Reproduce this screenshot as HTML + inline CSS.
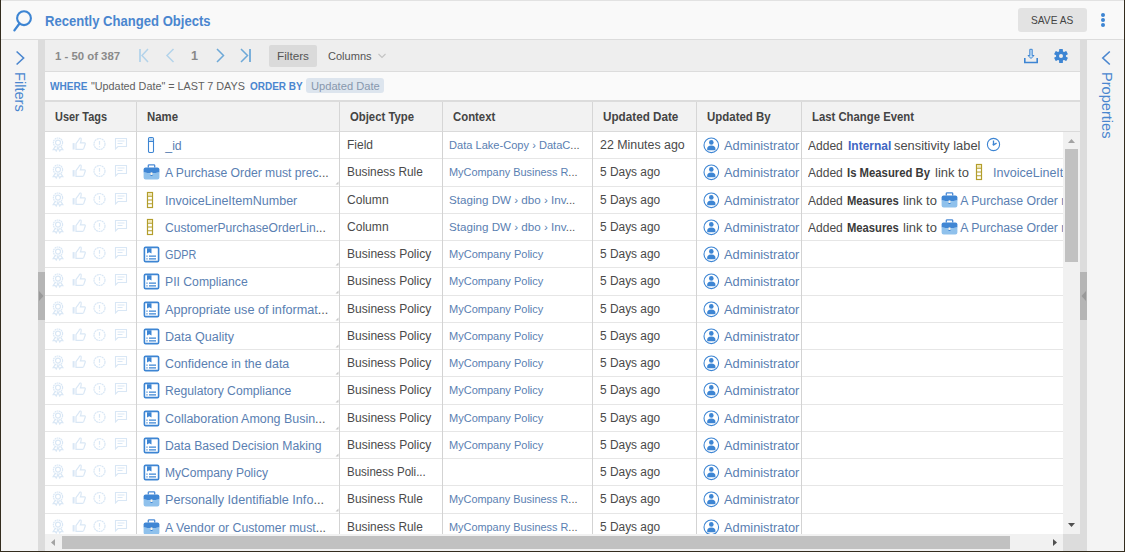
<!DOCTYPE html><html><head><meta charset="utf-8"><style>
*{box-sizing:border-box;margin:0;padding:0}
html,body{width:1125px;height:552px;overflow:hidden;background:#f4f4f4;font-family:"Liberation Sans",sans-serif;color:#333}
.a{position:absolute}
.t{position:absolute;white-space:nowrap;line-height:1;transform-origin:0 0}
</style></head><body>

<div class="a" style="left:0;top:0;width:1125px;height:1px;background:#e2e2e2"></div>
<div class="a" style="left:0;top:1px;width:1125px;height:38px;background:#f9f9f9"></div>
<div class="a" style="left:0;top:39px;width:1125px;height:1px;background:#dcdcdc"></div>
<svg class="a" style="left:11px;top:8px" width="24" height="26" viewBox="0 0 24 26"><circle cx="13" cy="10.2" r="6.9" fill="none" stroke="#3d85d3" stroke-width="2.1"/><path d="M8.5 15.5 L3.4 22.4" stroke="#3d85d3" stroke-width="2.3" stroke-linecap="round"/></svg>
<div class="t" style="left:44.7px;top:12.68px;font-size:15.5px;color:#4a86cf;font-weight:bold;transform:scaleX(0.8432);">Recently Changed Objects</div>
<div class="a" style="left:1018px;top:8px;width:69px;height:24px;background:#e3e3e3;border-radius:3px"></div>
<div class="t" style="left:1031.2px;top:14.86px;font-size:11.5px;color:#444;transform:scaleX(0.8862);">SAVE AS</div>
<div class="a" style="left:1101px;top:12.5px;width:4.2px;height:4.2px;border-radius:50%;background:#3d85d3"></div>
<div class="a" style="left:1101px;top:17.8px;width:4.2px;height:4.2px;border-radius:50%;background:#3d85d3"></div>
<div class="a" style="left:1101px;top:23.1px;width:4.2px;height:4.2px;border-radius:50%;background:#3d85d3"></div>
<svg class="a" style="left:14px;top:50px" width="12" height="16" viewBox="0 0 12 16"><path d="M2.6 1.5 L9.6 8 L2.6 14.5" fill="none" stroke="#4a86cf" stroke-width="1.6"/></svg>
<div class="t" style="left:27px;top:72px;font-size:14.6px;color:#4a86cf;transform:rotate(90deg)">Filters</div>
<svg class="a" style="left:1100px;top:50px" width="12" height="16" viewBox="0 0 12 16"><path d="M9.8 1.5 L2.8 8 L9.8 14.5" fill="none" stroke="#4a86cf" stroke-width="1.6"/></svg>
<div class="t" style="left:1113.5px;top:72px;font-size:14.6px;color:#4a86cf;transform:rotate(90deg)">Properties</div>
<div class="a" style="left:38px;top:40px;width:7px;height:511px;background:#dcdcdc"></div>
<div class="a" style="left:1080px;top:40px;width:7px;height:511px;background:#dcdcdc"></div>
<div class="a" style="left:38px;top:272px;width:7px;height:48px;background:#b5b5b5"></div>
<div class="a" style="left:1080px;top:272px;width:7px;height:48px;background:#b5b5b5"></div>
<svg class="a" style="left:38px;top:290px" width="7" height="12" viewBox="0 0 7 12"><path d="M1 1 L5.5 6 L1 11Z" fill="#999"/></svg>
<svg class="a" style="left:1080px;top:290px" width="7" height="12" viewBox="0 0 7 12"><path d="M6 1 L1.5 6 L6 11Z" fill="#999"/></svg>
<div class="a" style="left:45px;top:40px;width:1035px;height:31px;background:#eeeeee"></div>
<div class="a" style="left:45px;top:71px;width:1035px;height:1px;background:#dcdcdc"></div>
<div class="t" style="left:55.3px;top:49.98px;font-size:11.6px;color:#8a8a8a;font-weight:bold;transform:scaleX(0.9803);">1 - 50 of 387</div>
<svg class="a" style="left:136px;top:47px" width="120" height="18" viewBox="0 0 120 18"><path d="M4 2V15" stroke="#b3d3ea" stroke-width="1.8"/><path d="M12 2 L6 8.5 L12 15" fill="none" stroke="#b3d3ea" stroke-width="1.5"/><path d="M37.5 2 L31 8.5 L37.5 15" fill="none" stroke="#b3d3ea" stroke-width="1.5"/><path d="M81 2 L87.5 8.5 L81 15" fill="none" stroke="#6ea9d8" stroke-width="1.5"/><path d="M105 2 L111.5 8.5 L105 15" fill="none" stroke="#6ea9d8" stroke-width="1.5"/><path d="M114 2V15" stroke="#6ea9d8" stroke-width="1.8"/></svg>
<div class="t" style="left:190.8px;top:49.47px;font-size:13.5px;color:#888;font-weight:bold;transform:scaleX(0.9323);">1</div>
<div class="a" style="left:269px;top:45px;width:48px;height:22px;background:#dadada;border-radius:2px"></div>
<div class="t" style="left:277px;top:50.08px;font-size:11.6px;color:#555;transform:scaleX(1.0134);">Filters</div>
<div class="t" style="left:328.4px;top:50.08px;font-size:11.6px;color:#555;transform:scaleX(0.9526);">Columns</div>
<svg class="a" style="left:377px;top:52px" width="10" height="8" viewBox="0 0 10 8"><path d="M1.5 2 L5 5.5 L8.5 2" fill="none" stroke="#c3c3c3" stroke-width="1.1"/></svg>
<svg class="a" style="left:1022px;top:47px" width="18" height="18" viewBox="0 0 18 18"><path d="M2.8 11 V15.5 H15.2 V11" fill="none" stroke="#3d85d3" stroke-width="1.6"/><path d="M7.8 2.3 H10.2 V8.5 H12 L9 11.5 L6 8.5 H7.8 Z" fill="#c7e0f5" stroke="#3d85d3" stroke-width="1"/></svg>
<svg class="a" style="left:1053px;top:48px" width="16" height="16" viewBox="0 0 16 16"><g transform="translate(8,8)" fill="#3d85d3"><rect x="-1.9" y="-7" width="3.8" height="3.5" rx="0.6" transform="rotate(0)"/><rect x="-1.9" y="-7" width="3.8" height="3.5" rx="0.6" transform="rotate(60)"/><rect x="-1.9" y="-7" width="3.8" height="3.5" rx="0.6" transform="rotate(120)"/><rect x="-1.9" y="-7" width="3.8" height="3.5" rx="0.6" transform="rotate(180)"/><rect x="-1.9" y="-7" width="3.8" height="3.5" rx="0.6" transform="rotate(240)"/><rect x="-1.9" y="-7" width="3.8" height="3.5" rx="0.6" transform="rotate(300)"/><circle r="5" /></g><circle cx="8" cy="8" r="2" fill="#eee"/></svg>
<div class="a" style="left:45px;top:72px;width:1035px;height:28px;background:#fafafa"></div>
<div class="t" style="left:50.3px;top:79.98px;font-size:11.6px;color:#4a86cf;font-weight:bold;transform:scaleX(0.8662);">WHERE</div>
<div class="t" style="left:91px;top:79.98px;font-size:11.6px;color:#606060;transform:scaleX(0.9307);">"Updated Date" = LAST 7 DAYS</div>
<div class="t" style="left:249.6px;top:79.98px;font-size:11.6px;color:#4a86cf;font-weight:bold;transform:scaleX(0.8591);">ORDER BY</div>
<div class="a" style="left:306px;top:78px;width:78px;height:15px;background:#dde5ee;border-radius:3px"></div>
<div class="t" style="left:310.8px;top:79.98px;font-size:11.6px;color:#8797ad;transform:scaleX(0.9597);">Updated Date</div>
<div class="a" style="left:45px;top:100px;width:1035px;height:2px;background:#dcdcdc"></div>
<div class="a" style="left:45px;top:102px;width:1035px;height:29px;background:#f2f2f2"></div>
<div class="a" style="left:45px;top:131px;width:1035px;height:1px;background:#dadada"></div>
<div class="t" style="left:55.3px;top:111.16px;font-size:12.8px;color:#444;font-weight:bold;transform:scaleX(0.8532);">User Tags</div>
<div class="t" style="left:147.2px;top:111.16px;font-size:12.8px;color:#444;font-weight:bold;transform:scaleX(0.8892);">Name</div>
<div class="t" style="left:350px;top:111.16px;font-size:12.8px;color:#444;font-weight:bold;transform:scaleX(0.8850);">Object Type</div>
<div class="t" style="left:453.3px;top:111.16px;font-size:12.8px;color:#444;font-weight:bold;transform:scaleX(0.8878);">Context</div>
<div class="t" style="left:603.2px;top:111.16px;font-size:12.8px;color:#444;font-weight:bold;transform:scaleX(0.9139);">Updated Date</div>
<div class="t" style="left:707.3px;top:111.16px;font-size:12.8px;color:#444;font-weight:bold;transform:scaleX(0.8957);">Updated By</div>
<div class="t" style="left:812px;top:111.16px;font-size:12.8px;color:#444;font-weight:bold;transform:scaleX(0.8852);">Last Change Event</div>
<div class="a" style="left:136px;top:102px;width:1px;height:30px;background:#d6d6d6"></div>
<div class="a" style="left:339px;top:102px;width:1px;height:30px;background:#d6d6d6"></div>
<div class="a" style="left:442px;top:102px;width:1px;height:30px;background:#d6d6d6"></div>
<div class="a" style="left:592px;top:102px;width:1px;height:30px;background:#d6d6d6"></div>
<div class="a" style="left:696px;top:102px;width:1px;height:30px;background:#d6d6d6"></div>
<div class="a" style="left:801px;top:102px;width:1px;height:30px;background:#d6d6d6"></div>
<div class="a" style="left:45px;top:132px;width:1018px;height:402px;background:#fff;overflow:hidden">
<div class="a" style="left:0;top:26px;width:1018px;height:1px;background:#e6e6e6"></div>
<div class="a" style="left:0;top:0px;width:1018px;height:26px">
<svg width="80" height="16" viewBox="0 0 80 16" style="position:absolute;left:7px;top:4.5px">
<g fill="none" stroke="#d9e7f5" stroke-width="1.2">
<circle cx="6" cy="5.6" r="4.6" stroke-dasharray="1.7 0.5"/><circle cx="6" cy="5.6" r="2.5"/>
<path d="M3.3 9.4 L1.2 12.6 L3.2 12.5 L4.2 14 L6 10.6 L7.8 14 L8.8 12.5 L10.8 12.6 L8.7 9.4"/>
<rect x="20.6" y="6.1" width="2" height="6.4" fill="#d9e7f5" stroke="none"/>
<path d="M24 6.6 L27 2.6 Q27.5 0.6 28.8 1.1 Q29.6 1.6 29 4.1 L28.4 5.8 H32.5 Q33.6 6 33.2 7.2 L31.8 11.4 Q31.4 12.4 30.4 12.4 H24 Z"/>
<circle cx="47.5" cy="7" r="5.5" stroke-dasharray="2 0.5"/>
<path d="M47.5 4 V7.8 M47.5 9.3 V10.3"/>
<path d="M63.5 1.5 H74.5 V9.5 H66 L63.5 12 Z" stroke-width="1.1"/>
<path d="M65.5 4H72.5M65.5 6.5H70.5" stroke-width="1.2"/>
</g></svg>
</div>
<div class="a" style="left:102px;top:4px;line-height:0"><svg width="8" height="18" viewBox="0 0 8 18"><rect x="1.5" y="1.5" width="5" height="15" rx="1.2" fill="#fff" stroke="#3d85d3" stroke-width="1.1"/><rect x="2.1" y="2.1" width="3.8" height="3" fill="#bcd9f3"/><line x1="1.5" y1="5.5" x2="6.5" y2="5.5" stroke="#3d85d3" stroke-width="1"/></svg></div>
<div class="t" style="left:120.3px;top:7.59px;font-size:12.3px;color:#5a80b2;">_id</div>
<div class="t" style="left:301.5px;top:6.84px;font-size:12px;color:#4a4a4a;transform:scaleX(0.9996);">Field</div>
<div class="t" style="left:404.4px;top:7.60px;font-size:11.1px;color:#5a80b2;transform:scaleX(0.9986)">Data Lake-Copy › DataC<span style="color:#555">...</span></div>
<div class="t" style="left:554.6px;top:6.84px;font-size:12px;color:#4a4a4a;transform:scaleX(1.0322);">22 Minutes ago</div>
<div class="a" style="left:657.6px;top:4.6px;line-height:0"><svg width="17" height="17" viewBox="0 0 17 17"><circle cx="8.3" cy="8.3" r="7.3" fill="#fff" stroke="#3d85d3" stroke-width="1.1"/><circle cx="8.3" cy="5.4" r="2.3" fill="#3d85d3"/><path d="M4.1 12.2 Q4.1 8.6 8.3 8.6 Q12.5 8.6 12.5 12.2 Q12.5 13.3 11.4 13.3 H5.2 Q4.1 13.3 4.1 12.2Z" fill="#3d85d3"/></svg></div>
<div class="a" style="left:651px;top:0px;width:105px;height:25px;overflow:hidden"><div class="t" style="left:27.7px;top:7.59px;font-size:12.3px;color:#5a80b2;transform:scaleX(1.0406);">Administrator</div></div>
<div class="t" style="left:762.8px;top:7.84px;font-size:12px;color:#4a4a4a;transform:scaleX(1.0029);">Added</div>
<div class="t" style="left:802.6px;top:7.84px;font-size:12px;color:#3f66c4;font-weight:bold;transform:scaleX(0.9990);">Internal</div>
<div class="t" style="left:849.3px;top:7.84px;font-size:12px;color:#4a4a4a;transform:scaleX(1.0706);">sensitivity label</div>
<div class="a" style="left:941px;top:5px;line-height:0"><svg width="15" height="15" viewBox="0 0 15 15"><circle cx="7.5" cy="7.5" r="6.1" fill="none" stroke="#3d85d3" stroke-width="1.1"/><path d="M7.5 3.4V7.8L10.6 6.2" fill="none" stroke="#3d85d3" stroke-width="1.3" stroke-linejoin="round"/><circle cx="7.5" cy="7.6" r="1" fill="#3d85d3"/></svg></div>
<div class="a" style="left:0;top:54px;width:1018px;height:1px;background:#e6e6e6"></div>
<div class="a" style="left:0;top:27px;width:1018px;height:27px">
<svg width="80" height="16" viewBox="0 0 80 16" style="position:absolute;left:7px;top:4.5px">
<g fill="none" stroke="#d9e7f5" stroke-width="1.2">
<circle cx="6" cy="5.6" r="4.6" stroke-dasharray="1.7 0.5"/><circle cx="6" cy="5.6" r="2.5"/>
<path d="M3.3 9.4 L1.2 12.6 L3.2 12.5 L4.2 14 L6 10.6 L7.8 14 L8.8 12.5 L10.8 12.6 L8.7 9.4"/>
<rect x="20.6" y="6.1" width="2" height="6.4" fill="#d9e7f5" stroke="none"/>
<path d="M24 6.6 L27 2.6 Q27.5 0.6 28.8 1.1 Q29.6 1.6 29 4.1 L28.4 5.8 H32.5 Q33.6 6 33.2 7.2 L31.8 11.4 Q31.4 12.4 30.4 12.4 H24 Z"/>
<circle cx="47.5" cy="7" r="5.5" stroke-dasharray="2 0.5"/>
<path d="M47.5 4 V7.8 M47.5 9.3 V10.3"/>
<path d="M63.5 1.5 H74.5 V9.5 H66 L63.5 12 Z" stroke-width="1.1"/>
<path d="M65.5 4H72.5M65.5 6.5H70.5" stroke-width="1.2"/>
</g></svg>
</div>
<div class="a" style="left:97.6px;top:31.5px;line-height:0"><svg width="17" height="16" viewBox="0 0 17 16"><path d="M5.3 3.6V1.6 Q5.3 0.8 6.1 0.8 H10.9 Q11.7 0.8 11.7 1.6 V3.6" fill="none" stroke="#4a8ad6" stroke-width="1.3"/><path d="M0.6 5.4 Q0.6 3.4 2.6 3.4 H14.4 Q16.4 3.4 16.4 5.4 V8.6 Q8.5 10 0.6 8.6 Z" fill="#3f86d4"/><path d="M0.6 8.6 Q8.5 10 16.4 8.6 V13.6 Q16.4 15.6 14.4 15.6 H2.6 Q0.6 15.6 0.6 13.6 Z" fill="#8fc1ec"/><rect x="7.5" y="10.6" width="2" height="1.4" fill="#3f86d4"/><rect x="7.6" y="8.4" width="1.8" height="2.6" fill="#fdf3e6"/></svg></div>
<div class="t" style="left:120.3px;top:34.59px;font-size:12.3px;color:#5a80b2;transform:scaleX(0.9895)">A Purchase Order must prec<span style="color:#555">...</span></div>
<svg class="a" style="left:290px;top:49px" width="4" height="4" viewBox="0 0 4 4"><path d="M3.5 0.5V3.5H0.5Z" fill="#c8c8c8"/></svg>
<div class="t" style="left:301.5px;top:33.84px;font-size:12px;color:#4a4a4a;transform:scaleX(0.9882);">Business Rule</div>
<div class="t" style="left:404.4px;top:34.60px;font-size:11.1px;color:#5a80b2;transform:scaleX(0.9826)">MyCompany Business R<span style="color:#555">...</span></div>
<div class="t" style="left:554.6px;top:33.84px;font-size:12px;color:#4a4a4a;transform:scaleX(0.9917);">5 Days ago</div>
<div class="a" style="left:657.6px;top:31.6px;line-height:0"><svg width="17" height="17" viewBox="0 0 17 17"><circle cx="8.3" cy="8.3" r="7.3" fill="#fff" stroke="#3d85d3" stroke-width="1.1"/><circle cx="8.3" cy="5.4" r="2.3" fill="#3d85d3"/><path d="M4.1 12.2 Q4.1 8.6 8.3 8.6 Q12.5 8.6 12.5 12.2 Q12.5 13.3 11.4 13.3 H5.2 Q4.1 13.3 4.1 12.2Z" fill="#3d85d3"/></svg></div>
<div class="a" style="left:651px;top:27px;width:105px;height:25px;overflow:hidden"><div class="t" style="left:27.7px;top:7.59px;font-size:12.3px;color:#5a80b2;transform:scaleX(1.0406);">Administrator</div></div>
<div class="t" style="left:763.2px;top:34.84px;font-size:12px;color:#4a4a4a;transform:scaleX(1.0029);">Added</div>
<div class="t" style="left:802.4px;top:34.84px;font-size:12px;color:#3a3a3a;font-weight:bold;transform:scaleX(0.9428);">Is Measured By</div>
<div class="t" style="left:889.5px;top:34.84px;font-size:12px;color:#4a4a4a;transform:scaleX(1.0814);">link to</div>
<div class="a" style="left:930px;top:31px;line-height:0"><svg width="8" height="18" viewBox="0 0 8 18"><rect x="1.5" y="1.5" width="5" height="15" fill="#fff" stroke="#b39e2c" stroke-width="1.2"/><rect x="2.1" y="2.1" width="3.8" height="2.6" fill="#f1e7b4"/><path d="M1.5 5.2H6.5M1.5 9H6.5M1.5 12.8H6.5" stroke="#b39e2c" stroke-width="1.1"/></svg></div>
<div class="t" style="left:948.3px;top:34.59px;font-size:12.3px;color:#5a80b2;transform:scaleX(1.0185);">InvoiceLineItemNumber</div>
<div class="a" style="left:0;top:81px;width:1018px;height:1px;background:#e6e6e6"></div>
<div class="a" style="left:0;top:55px;width:1018px;height:26px">
<svg width="80" height="16" viewBox="0 0 80 16" style="position:absolute;left:7px;top:4.5px">
<g fill="none" stroke="#d9e7f5" stroke-width="1.2">
<circle cx="6" cy="5.6" r="4.6" stroke-dasharray="1.7 0.5"/><circle cx="6" cy="5.6" r="2.5"/>
<path d="M3.3 9.4 L1.2 12.6 L3.2 12.5 L4.2 14 L6 10.6 L7.8 14 L8.8 12.5 L10.8 12.6 L8.7 9.4"/>
<rect x="20.6" y="6.1" width="2" height="6.4" fill="#d9e7f5" stroke="none"/>
<path d="M24 6.6 L27 2.6 Q27.5 0.6 28.8 1.1 Q29.6 1.6 29 4.1 L28.4 5.8 H32.5 Q33.6 6 33.2 7.2 L31.8 11.4 Q31.4 12.4 30.4 12.4 H24 Z"/>
<circle cx="47.5" cy="7" r="5.5" stroke-dasharray="2 0.5"/>
<path d="M47.5 4 V7.8 M47.5 9.3 V10.3"/>
<path d="M63.5 1.5 H74.5 V9.5 H66 L63.5 12 Z" stroke-width="1.1"/>
<path d="M65.5 4H72.5M65.5 6.5H70.5" stroke-width="1.2"/>
</g></svg>
</div>
<div class="a" style="left:101px;top:59px;line-height:0"><svg width="8" height="18" viewBox="0 0 8 18"><rect x="1.5" y="1.5" width="5" height="15" fill="#fff" stroke="#b39e2c" stroke-width="1.2"/><rect x="2.1" y="2.1" width="3.8" height="2.6" fill="#f1e7b4"/><path d="M1.5 5.2H6.5M1.5 9H6.5M1.5 12.8H6.5" stroke="#b39e2c" stroke-width="1.1"/></svg></div>
<div class="t" style="left:120.3px;top:62.59px;font-size:12.3px;color:#5a80b2;transform:scaleX(1.0185);">InvoiceLineItemNumber</div>
<div class="t" style="left:301.5px;top:61.84px;font-size:12px;color:#4a4a4a;transform:scaleX(1.0060);">Column</div>
<div class="t" style="left:404.4px;top:62.60px;font-size:11.1px;color:#5a80b2;transform:scaleX(1.0472)">Staging DW › dbo › Inv<span style="color:#555">...</span></div>
<div class="t" style="left:554.6px;top:61.84px;font-size:12px;color:#4a4a4a;transform:scaleX(0.9917);">5 Days ago</div>
<div class="a" style="left:657.6px;top:59.6px;line-height:0"><svg width="17" height="17" viewBox="0 0 17 17"><circle cx="8.3" cy="8.3" r="7.3" fill="#fff" stroke="#3d85d3" stroke-width="1.1"/><circle cx="8.3" cy="5.4" r="2.3" fill="#3d85d3"/><path d="M4.1 12.2 Q4.1 8.6 8.3 8.6 Q12.5 8.6 12.5 12.2 Q12.5 13.3 11.4 13.3 H5.2 Q4.1 13.3 4.1 12.2Z" fill="#3d85d3"/></svg></div>
<div class="a" style="left:651px;top:55px;width:105px;height:25px;overflow:hidden"><div class="t" style="left:27.7px;top:7.59px;font-size:12.3px;color:#5a80b2;transform:scaleX(1.0406);">Administrator</div></div>
<div class="t" style="left:763.2px;top:62.84px;font-size:12px;color:#4a4a4a;transform:scaleX(1.0029);">Added</div>
<div class="t" style="left:802.1px;top:62.84px;font-size:12px;color:#3a3a3a;font-weight:bold;transform:scaleX(0.9356);">Measures</div>
<div class="t" style="left:858.2px;top:62.84px;font-size:12px;color:#4a4a4a;transform:scaleX(1.0814);">link to</div>
<div class="a" style="left:895.6px;top:59.5px;line-height:0"><svg width="17" height="16" viewBox="0 0 17 16"><path d="M5.3 3.6V1.6 Q5.3 0.8 6.1 0.8 H10.9 Q11.7 0.8 11.7 1.6 V3.6" fill="none" stroke="#4a8ad6" stroke-width="1.3"/><path d="M0.6 5.4 Q0.6 3.4 2.6 3.4 H14.4 Q16.4 3.4 16.4 5.4 V8.6 Q8.5 10 0.6 8.6 Z" fill="#3f86d4"/><path d="M0.6 8.6 Q8.5 10 16.4 8.6 V13.6 Q16.4 15.6 14.4 15.6 H2.6 Q0.6 15.6 0.6 13.6 Z" fill="#8fc1ec"/><rect x="7.5" y="10.6" width="2" height="1.4" fill="#3f86d4"/><rect x="7.6" y="8.4" width="1.8" height="2.6" fill="#fdf3e6"/></svg></div>
<div class="t" style="left:915.2px;top:62.59px;font-size:12.3px;color:#5a80b2;">A Purchase Order must precede</div>
<div class="a" style="left:0;top:108px;width:1018px;height:1px;background:#e6e6e6"></div>
<div class="a" style="left:0;top:82px;width:1018px;height:26px">
<svg width="80" height="16" viewBox="0 0 80 16" style="position:absolute;left:7px;top:4.5px">
<g fill="none" stroke="#d9e7f5" stroke-width="1.2">
<circle cx="6" cy="5.6" r="4.6" stroke-dasharray="1.7 0.5"/><circle cx="6" cy="5.6" r="2.5"/>
<path d="M3.3 9.4 L1.2 12.6 L3.2 12.5 L4.2 14 L6 10.6 L7.8 14 L8.8 12.5 L10.8 12.6 L8.7 9.4"/>
<rect x="20.6" y="6.1" width="2" height="6.4" fill="#d9e7f5" stroke="none"/>
<path d="M24 6.6 L27 2.6 Q27.5 0.6 28.8 1.1 Q29.6 1.6 29 4.1 L28.4 5.8 H32.5 Q33.6 6 33.2 7.2 L31.8 11.4 Q31.4 12.4 30.4 12.4 H24 Z"/>
<circle cx="47.5" cy="7" r="5.5" stroke-dasharray="2 0.5"/>
<path d="M47.5 4 V7.8 M47.5 9.3 V10.3"/>
<path d="M63.5 1.5 H74.5 V9.5 H66 L63.5 12 Z" stroke-width="1.1"/>
<path d="M65.5 4H72.5M65.5 6.5H70.5" stroke-width="1.2"/>
</g></svg>
</div>
<div class="a" style="left:101px;top:86px;line-height:0"><svg width="8" height="18" viewBox="0 0 8 18"><rect x="1.5" y="1.5" width="5" height="15" fill="#fff" stroke="#b39e2c" stroke-width="1.2"/><rect x="2.1" y="2.1" width="3.8" height="2.6" fill="#f1e7b4"/><path d="M1.5 5.2H6.5M1.5 9H6.5M1.5 12.8H6.5" stroke="#b39e2c" stroke-width="1.1"/></svg></div>
<div class="t" style="left:120.3px;top:89.59px;font-size:12.3px;color:#5a80b2;transform:scaleX(0.9842)">CustomerPurchaseOrderLin<span style="color:#555">...</span></div>
<div class="t" style="left:301.5px;top:88.84px;font-size:12px;color:#4a4a4a;transform:scaleX(1.0060);">Column</div>
<div class="t" style="left:404.4px;top:89.60px;font-size:11.1px;color:#5a80b2;transform:scaleX(1.0472)">Staging DW › dbo › Inv<span style="color:#555">...</span></div>
<div class="t" style="left:554.6px;top:88.84px;font-size:12px;color:#4a4a4a;transform:scaleX(0.9917);">5 Days ago</div>
<div class="a" style="left:657.6px;top:86.6px;line-height:0"><svg width="17" height="17" viewBox="0 0 17 17"><circle cx="8.3" cy="8.3" r="7.3" fill="#fff" stroke="#3d85d3" stroke-width="1.1"/><circle cx="8.3" cy="5.4" r="2.3" fill="#3d85d3"/><path d="M4.1 12.2 Q4.1 8.6 8.3 8.6 Q12.5 8.6 12.5 12.2 Q12.5 13.3 11.4 13.3 H5.2 Q4.1 13.3 4.1 12.2Z" fill="#3d85d3"/></svg></div>
<div class="a" style="left:651px;top:82px;width:105px;height:25px;overflow:hidden"><div class="t" style="left:27.7px;top:7.59px;font-size:12.3px;color:#5a80b2;transform:scaleX(1.0406);">Administrator</div></div>
<div class="t" style="left:763.2px;top:89.84px;font-size:12px;color:#4a4a4a;transform:scaleX(1.0029);">Added</div>
<div class="t" style="left:802.1px;top:89.84px;font-size:12px;color:#3a3a3a;font-weight:bold;transform:scaleX(0.9356);">Measures</div>
<div class="t" style="left:858.2px;top:89.84px;font-size:12px;color:#4a4a4a;transform:scaleX(1.0814);">link to</div>
<div class="a" style="left:895.6px;top:86.5px;line-height:0"><svg width="17" height="16" viewBox="0 0 17 16"><path d="M5.3 3.6V1.6 Q5.3 0.8 6.1 0.8 H10.9 Q11.7 0.8 11.7 1.6 V3.6" fill="none" stroke="#4a8ad6" stroke-width="1.3"/><path d="M0.6 5.4 Q0.6 3.4 2.6 3.4 H14.4 Q16.4 3.4 16.4 5.4 V8.6 Q8.5 10 0.6 8.6 Z" fill="#3f86d4"/><path d="M0.6 8.6 Q8.5 10 16.4 8.6 V13.6 Q16.4 15.6 14.4 15.6 H2.6 Q0.6 15.6 0.6 13.6 Z" fill="#8fc1ec"/><rect x="7.5" y="10.6" width="2" height="1.4" fill="#3f86d4"/><rect x="7.6" y="8.4" width="1.8" height="2.6" fill="#fdf3e6"/></svg></div>
<div class="t" style="left:915.2px;top:89.59px;font-size:12.3px;color:#5a80b2;">A Purchase Order must precede</div>
<div class="a" style="left:0;top:135px;width:1018px;height:1px;background:#e6e6e6"></div>
<div class="a" style="left:0;top:109px;width:1018px;height:26px">
<svg width="80" height="16" viewBox="0 0 80 16" style="position:absolute;left:7px;top:4.5px">
<g fill="none" stroke="#d9e7f5" stroke-width="1.2">
<circle cx="6" cy="5.6" r="4.6" stroke-dasharray="1.7 0.5"/><circle cx="6" cy="5.6" r="2.5"/>
<path d="M3.3 9.4 L1.2 12.6 L3.2 12.5 L4.2 14 L6 10.6 L7.8 14 L8.8 12.5 L10.8 12.6 L8.7 9.4"/>
<rect x="20.6" y="6.1" width="2" height="6.4" fill="#d9e7f5" stroke="none"/>
<path d="M24 6.6 L27 2.6 Q27.5 0.6 28.8 1.1 Q29.6 1.6 29 4.1 L28.4 5.8 H32.5 Q33.6 6 33.2 7.2 L31.8 11.4 Q31.4 12.4 30.4 12.4 H24 Z"/>
<circle cx="47.5" cy="7" r="5.5" stroke-dasharray="2 0.5"/>
<path d="M47.5 4 V7.8 M47.5 9.3 V10.3"/>
<path d="M63.5 1.5 H74.5 V9.5 H66 L63.5 12 Z" stroke-width="1.1"/>
<path d="M65.5 4H72.5M65.5 6.5H70.5" stroke-width="1.2"/>
</g></svg>
</div>
<div class="a" style="left:97.6px;top:114px;line-height:0"><svg width="17" height="17" viewBox="0 0 17 17"><rect x="1.4" y="1.4" width="14.2" height="14.2" rx="1.2" fill="#fff" stroke="#3d85d3" stroke-width="1.6"/><path d="M4 2.2 H8.5 V7.6 L6.25 6.2 L4 7.6 Z" fill="#3d85d3"/><path d="M6 10.2H13M6 12.8H13" stroke="#3d85d3" stroke-width="1.2"/><path d="M3.4 10.2H4.6M3.4 12.8H4.6" stroke="#3d85d3" stroke-width="1.2"/></svg></div>
<div class="t" style="left:120.3px;top:116.59px;font-size:12.3px;color:#5a80b2;transform:scaleX(0.8808);">GDPR</div>
<svg class="a" style="left:290px;top:130px" width="4" height="4" viewBox="0 0 4 4"><path d="M3.5 0.5V3.5H0.5Z" fill="#c8c8c8"/></svg>
<div class="t" style="left:301.5px;top:115.84px;font-size:12px;color:#4a4a4a;transform:scaleX(1.0020);">Business Policy</div>
<div class="t" style="left:404.4px;top:116.60px;font-size:11.1px;color:#5a80b2;transform:scaleX(0.9937);">MyCompany Policy</div>
<div class="t" style="left:554.6px;top:115.84px;font-size:12px;color:#4a4a4a;transform:scaleX(0.9917);">5 Days ago</div>
<div class="a" style="left:657.6px;top:113.6px;line-height:0"><svg width="17" height="17" viewBox="0 0 17 17"><circle cx="8.3" cy="8.3" r="7.3" fill="#fff" stroke="#3d85d3" stroke-width="1.1"/><circle cx="8.3" cy="5.4" r="2.3" fill="#3d85d3"/><path d="M4.1 12.2 Q4.1 8.6 8.3 8.6 Q12.5 8.6 12.5 12.2 Q12.5 13.3 11.4 13.3 H5.2 Q4.1 13.3 4.1 12.2Z" fill="#3d85d3"/></svg></div>
<div class="a" style="left:651px;top:109px;width:105px;height:25px;overflow:hidden"><div class="t" style="left:27.7px;top:7.59px;font-size:12.3px;color:#5a80b2;transform:scaleX(1.0406);">Administrator</div></div>
<div class="a" style="left:0;top:163px;width:1018px;height:1px;background:#e6e6e6"></div>
<div class="a" style="left:0;top:136px;width:1018px;height:27px">
<svg width="80" height="16" viewBox="0 0 80 16" style="position:absolute;left:7px;top:4.5px">
<g fill="none" stroke="#d9e7f5" stroke-width="1.2">
<circle cx="6" cy="5.6" r="4.6" stroke-dasharray="1.7 0.5"/><circle cx="6" cy="5.6" r="2.5"/>
<path d="M3.3 9.4 L1.2 12.6 L3.2 12.5 L4.2 14 L6 10.6 L7.8 14 L8.8 12.5 L10.8 12.6 L8.7 9.4"/>
<rect x="20.6" y="6.1" width="2" height="6.4" fill="#d9e7f5" stroke="none"/>
<path d="M24 6.6 L27 2.6 Q27.5 0.6 28.8 1.1 Q29.6 1.6 29 4.1 L28.4 5.8 H32.5 Q33.6 6 33.2 7.2 L31.8 11.4 Q31.4 12.4 30.4 12.4 H24 Z"/>
<circle cx="47.5" cy="7" r="5.5" stroke-dasharray="2 0.5"/>
<path d="M47.5 4 V7.8 M47.5 9.3 V10.3"/>
<path d="M63.5 1.5 H74.5 V9.5 H66 L63.5 12 Z" stroke-width="1.1"/>
<path d="M65.5 4H72.5M65.5 6.5H70.5" stroke-width="1.2"/>
</g></svg>
</div>
<div class="a" style="left:97.6px;top:141px;line-height:0"><svg width="17" height="17" viewBox="0 0 17 17"><rect x="1.4" y="1.4" width="14.2" height="14.2" rx="1.2" fill="#fff" stroke="#3d85d3" stroke-width="1.6"/><path d="M4 2.2 H8.5 V7.6 L6.25 6.2 L4 7.6 Z" fill="#3d85d3"/><path d="M6 10.2H13M6 12.8H13" stroke="#3d85d3" stroke-width="1.2"/><path d="M3.4 10.2H4.6M3.4 12.8H4.6" stroke="#3d85d3" stroke-width="1.2"/></svg></div>
<div class="t" style="left:120.3px;top:143.59px;font-size:12.3px;color:#5a80b2;transform:scaleX(0.9916);">PII Compliance</div>
<svg class="a" style="left:290px;top:158px" width="4" height="4" viewBox="0 0 4 4"><path d="M3.5 0.5V3.5H0.5Z" fill="#c8c8c8"/></svg>
<div class="t" style="left:301.5px;top:142.84px;font-size:12px;color:#4a4a4a;transform:scaleX(1.0020);">Business Policy</div>
<div class="t" style="left:404.4px;top:143.60px;font-size:11.1px;color:#5a80b2;transform:scaleX(0.9937);">MyCompany Policy</div>
<div class="t" style="left:554.6px;top:142.84px;font-size:12px;color:#4a4a4a;transform:scaleX(0.9917);">5 Days ago</div>
<div class="a" style="left:657.6px;top:140.6px;line-height:0"><svg width="17" height="17" viewBox="0 0 17 17"><circle cx="8.3" cy="8.3" r="7.3" fill="#fff" stroke="#3d85d3" stroke-width="1.1"/><circle cx="8.3" cy="5.4" r="2.3" fill="#3d85d3"/><path d="M4.1 12.2 Q4.1 8.6 8.3 8.6 Q12.5 8.6 12.5 12.2 Q12.5 13.3 11.4 13.3 H5.2 Q4.1 13.3 4.1 12.2Z" fill="#3d85d3"/></svg></div>
<div class="a" style="left:651px;top:136px;width:105px;height:25px;overflow:hidden"><div class="t" style="left:27.7px;top:7.59px;font-size:12.3px;color:#5a80b2;transform:scaleX(1.0406);">Administrator</div></div>
<div class="a" style="left:0;top:190px;width:1018px;height:1px;background:#e6e6e6"></div>
<div class="a" style="left:0;top:164px;width:1018px;height:26px">
<svg width="80" height="16" viewBox="0 0 80 16" style="position:absolute;left:7px;top:4.5px">
<g fill="none" stroke="#d9e7f5" stroke-width="1.2">
<circle cx="6" cy="5.6" r="4.6" stroke-dasharray="1.7 0.5"/><circle cx="6" cy="5.6" r="2.5"/>
<path d="M3.3 9.4 L1.2 12.6 L3.2 12.5 L4.2 14 L6 10.6 L7.8 14 L8.8 12.5 L10.8 12.6 L8.7 9.4"/>
<rect x="20.6" y="6.1" width="2" height="6.4" fill="#d9e7f5" stroke="none"/>
<path d="M24 6.6 L27 2.6 Q27.5 0.6 28.8 1.1 Q29.6 1.6 29 4.1 L28.4 5.8 H32.5 Q33.6 6 33.2 7.2 L31.8 11.4 Q31.4 12.4 30.4 12.4 H24 Z"/>
<circle cx="47.5" cy="7" r="5.5" stroke-dasharray="2 0.5"/>
<path d="M47.5 4 V7.8 M47.5 9.3 V10.3"/>
<path d="M63.5 1.5 H74.5 V9.5 H66 L63.5 12 Z" stroke-width="1.1"/>
<path d="M65.5 4H72.5M65.5 6.5H70.5" stroke-width="1.2"/>
</g></svg>
</div>
<div class="a" style="left:97.6px;top:169px;line-height:0"><svg width="17" height="17" viewBox="0 0 17 17"><rect x="1.4" y="1.4" width="14.2" height="14.2" rx="1.2" fill="#fff" stroke="#3d85d3" stroke-width="1.6"/><path d="M4 2.2 H8.5 V7.6 L6.25 6.2 L4 7.6 Z" fill="#3d85d3"/><path d="M6 10.2H13M6 12.8H13" stroke="#3d85d3" stroke-width="1.2"/><path d="M3.4 10.2H4.6M3.4 12.8H4.6" stroke="#3d85d3" stroke-width="1.2"/></svg></div>
<div class="t" style="left:120.3px;top:171.59px;font-size:12.3px;color:#5a80b2;transform:scaleX(1.0302)">Appropriate use of informat<span style="color:#555">...</span></div>
<svg class="a" style="left:290px;top:185px" width="4" height="4" viewBox="0 0 4 4"><path d="M3.5 0.5V3.5H0.5Z" fill="#c8c8c8"/></svg>
<div class="t" style="left:301.5px;top:170.84px;font-size:12px;color:#4a4a4a;transform:scaleX(1.0020);">Business Policy</div>
<div class="t" style="left:404.4px;top:171.60px;font-size:11.1px;color:#5a80b2;transform:scaleX(0.9937);">MyCompany Policy</div>
<div class="t" style="left:554.6px;top:170.84px;font-size:12px;color:#4a4a4a;transform:scaleX(0.9917);">5 Days ago</div>
<div class="a" style="left:657.6px;top:168.6px;line-height:0"><svg width="17" height="17" viewBox="0 0 17 17"><circle cx="8.3" cy="8.3" r="7.3" fill="#fff" stroke="#3d85d3" stroke-width="1.1"/><circle cx="8.3" cy="5.4" r="2.3" fill="#3d85d3"/><path d="M4.1 12.2 Q4.1 8.6 8.3 8.6 Q12.5 8.6 12.5 12.2 Q12.5 13.3 11.4 13.3 H5.2 Q4.1 13.3 4.1 12.2Z" fill="#3d85d3"/></svg></div>
<div class="a" style="left:651px;top:164px;width:105px;height:25px;overflow:hidden"><div class="t" style="left:27.7px;top:7.59px;font-size:12.3px;color:#5a80b2;transform:scaleX(1.0406);">Administrator</div></div>
<div class="a" style="left:0;top:217px;width:1018px;height:1px;background:#e6e6e6"></div>
<div class="a" style="left:0;top:191px;width:1018px;height:26px">
<svg width="80" height="16" viewBox="0 0 80 16" style="position:absolute;left:7px;top:4.5px">
<g fill="none" stroke="#d9e7f5" stroke-width="1.2">
<circle cx="6" cy="5.6" r="4.6" stroke-dasharray="1.7 0.5"/><circle cx="6" cy="5.6" r="2.5"/>
<path d="M3.3 9.4 L1.2 12.6 L3.2 12.5 L4.2 14 L6 10.6 L7.8 14 L8.8 12.5 L10.8 12.6 L8.7 9.4"/>
<rect x="20.6" y="6.1" width="2" height="6.4" fill="#d9e7f5" stroke="none"/>
<path d="M24 6.6 L27 2.6 Q27.5 0.6 28.8 1.1 Q29.6 1.6 29 4.1 L28.4 5.8 H32.5 Q33.6 6 33.2 7.2 L31.8 11.4 Q31.4 12.4 30.4 12.4 H24 Z"/>
<circle cx="47.5" cy="7" r="5.5" stroke-dasharray="2 0.5"/>
<path d="M47.5 4 V7.8 M47.5 9.3 V10.3"/>
<path d="M63.5 1.5 H74.5 V9.5 H66 L63.5 12 Z" stroke-width="1.1"/>
<path d="M65.5 4H72.5M65.5 6.5H70.5" stroke-width="1.2"/>
</g></svg>
</div>
<div class="a" style="left:97.6px;top:196px;line-height:0"><svg width="17" height="17" viewBox="0 0 17 17"><rect x="1.4" y="1.4" width="14.2" height="14.2" rx="1.2" fill="#fff" stroke="#3d85d3" stroke-width="1.6"/><path d="M4 2.2 H8.5 V7.6 L6.25 6.2 L4 7.6 Z" fill="#3d85d3"/><path d="M6 10.2H13M6 12.8H13" stroke="#3d85d3" stroke-width="1.2"/><path d="M3.4 10.2H4.6M3.4 12.8H4.6" stroke="#3d85d3" stroke-width="1.2"/></svg></div>
<div class="t" style="left:120.3px;top:198.59px;font-size:12.3px;color:#5a80b2;transform:scaleX(1.0210);">Data Quality</div>
<svg class="a" style="left:290px;top:212px" width="4" height="4" viewBox="0 0 4 4"><path d="M3.5 0.5V3.5H0.5Z" fill="#c8c8c8"/></svg>
<div class="t" style="left:301.5px;top:197.84px;font-size:12px;color:#4a4a4a;transform:scaleX(1.0020);">Business Policy</div>
<div class="t" style="left:404.4px;top:198.60px;font-size:11.1px;color:#5a80b2;transform:scaleX(0.9937);">MyCompany Policy</div>
<div class="t" style="left:554.6px;top:197.84px;font-size:12px;color:#4a4a4a;transform:scaleX(0.9917);">5 Days ago</div>
<div class="a" style="left:657.6px;top:195.6px;line-height:0"><svg width="17" height="17" viewBox="0 0 17 17"><circle cx="8.3" cy="8.3" r="7.3" fill="#fff" stroke="#3d85d3" stroke-width="1.1"/><circle cx="8.3" cy="5.4" r="2.3" fill="#3d85d3"/><path d="M4.1 12.2 Q4.1 8.6 8.3 8.6 Q12.5 8.6 12.5 12.2 Q12.5 13.3 11.4 13.3 H5.2 Q4.1 13.3 4.1 12.2Z" fill="#3d85d3"/></svg></div>
<div class="a" style="left:651px;top:191px;width:105px;height:25px;overflow:hidden"><div class="t" style="left:27.7px;top:7.59px;font-size:12.3px;color:#5a80b2;transform:scaleX(1.0406);">Administrator</div></div>
<div class="a" style="left:0;top:244px;width:1018px;height:1px;background:#e6e6e6"></div>
<div class="a" style="left:0;top:218px;width:1018px;height:26px">
<svg width="80" height="16" viewBox="0 0 80 16" style="position:absolute;left:7px;top:4.5px">
<g fill="none" stroke="#d9e7f5" stroke-width="1.2">
<circle cx="6" cy="5.6" r="4.6" stroke-dasharray="1.7 0.5"/><circle cx="6" cy="5.6" r="2.5"/>
<path d="M3.3 9.4 L1.2 12.6 L3.2 12.5 L4.2 14 L6 10.6 L7.8 14 L8.8 12.5 L10.8 12.6 L8.7 9.4"/>
<rect x="20.6" y="6.1" width="2" height="6.4" fill="#d9e7f5" stroke="none"/>
<path d="M24 6.6 L27 2.6 Q27.5 0.6 28.8 1.1 Q29.6 1.6 29 4.1 L28.4 5.8 H32.5 Q33.6 6 33.2 7.2 L31.8 11.4 Q31.4 12.4 30.4 12.4 H24 Z"/>
<circle cx="47.5" cy="7" r="5.5" stroke-dasharray="2 0.5"/>
<path d="M47.5 4 V7.8 M47.5 9.3 V10.3"/>
<path d="M63.5 1.5 H74.5 V9.5 H66 L63.5 12 Z" stroke-width="1.1"/>
<path d="M65.5 4H72.5M65.5 6.5H70.5" stroke-width="1.2"/>
</g></svg>
</div>
<div class="a" style="left:97.6px;top:223px;line-height:0"><svg width="17" height="17" viewBox="0 0 17 17"><rect x="1.4" y="1.4" width="14.2" height="14.2" rx="1.2" fill="#fff" stroke="#3d85d3" stroke-width="1.6"/><path d="M4 2.2 H8.5 V7.6 L6.25 6.2 L4 7.6 Z" fill="#3d85d3"/><path d="M6 10.2H13M6 12.8H13" stroke="#3d85d3" stroke-width="1.2"/><path d="M3.4 10.2H4.6M3.4 12.8H4.6" stroke="#3d85d3" stroke-width="1.2"/></svg></div>
<div class="t" style="left:120.3px;top:225.59px;font-size:12.3px;color:#5a80b2;transform:scaleX(1.0098);">Confidence in the data</div>
<svg class="a" style="left:290px;top:239px" width="4" height="4" viewBox="0 0 4 4"><path d="M3.5 0.5V3.5H0.5Z" fill="#c8c8c8"/></svg>
<div class="t" style="left:301.5px;top:224.84px;font-size:12px;color:#4a4a4a;transform:scaleX(1.0020);">Business Policy</div>
<div class="t" style="left:404.4px;top:225.60px;font-size:11.1px;color:#5a80b2;transform:scaleX(0.9937);">MyCompany Policy</div>
<div class="t" style="left:554.6px;top:224.84px;font-size:12px;color:#4a4a4a;transform:scaleX(0.9917);">5 Days ago</div>
<div class="a" style="left:657.6px;top:222.6px;line-height:0"><svg width="17" height="17" viewBox="0 0 17 17"><circle cx="8.3" cy="8.3" r="7.3" fill="#fff" stroke="#3d85d3" stroke-width="1.1"/><circle cx="8.3" cy="5.4" r="2.3" fill="#3d85d3"/><path d="M4.1 12.2 Q4.1 8.6 8.3 8.6 Q12.5 8.6 12.5 12.2 Q12.5 13.3 11.4 13.3 H5.2 Q4.1 13.3 4.1 12.2Z" fill="#3d85d3"/></svg></div>
<div class="a" style="left:651px;top:218px;width:105px;height:25px;overflow:hidden"><div class="t" style="left:27.7px;top:7.59px;font-size:12.3px;color:#5a80b2;transform:scaleX(1.0406);">Administrator</div></div>
<div class="a" style="left:0;top:272px;width:1018px;height:1px;background:#e6e6e6"></div>
<div class="a" style="left:0;top:245px;width:1018px;height:27px">
<svg width="80" height="16" viewBox="0 0 80 16" style="position:absolute;left:7px;top:4.5px">
<g fill="none" stroke="#d9e7f5" stroke-width="1.2">
<circle cx="6" cy="5.6" r="4.6" stroke-dasharray="1.7 0.5"/><circle cx="6" cy="5.6" r="2.5"/>
<path d="M3.3 9.4 L1.2 12.6 L3.2 12.5 L4.2 14 L6 10.6 L7.8 14 L8.8 12.5 L10.8 12.6 L8.7 9.4"/>
<rect x="20.6" y="6.1" width="2" height="6.4" fill="#d9e7f5" stroke="none"/>
<path d="M24 6.6 L27 2.6 Q27.5 0.6 28.8 1.1 Q29.6 1.6 29 4.1 L28.4 5.8 H32.5 Q33.6 6 33.2 7.2 L31.8 11.4 Q31.4 12.4 30.4 12.4 H24 Z"/>
<circle cx="47.5" cy="7" r="5.5" stroke-dasharray="2 0.5"/>
<path d="M47.5 4 V7.8 M47.5 9.3 V10.3"/>
<path d="M63.5 1.5 H74.5 V9.5 H66 L63.5 12 Z" stroke-width="1.1"/>
<path d="M65.5 4H72.5M65.5 6.5H70.5" stroke-width="1.2"/>
</g></svg>
</div>
<div class="a" style="left:97.6px;top:250px;line-height:0"><svg width="17" height="17" viewBox="0 0 17 17"><rect x="1.4" y="1.4" width="14.2" height="14.2" rx="1.2" fill="#fff" stroke="#3d85d3" stroke-width="1.6"/><path d="M4 2.2 H8.5 V7.6 L6.25 6.2 L4 7.6 Z" fill="#3d85d3"/><path d="M6 10.2H13M6 12.8H13" stroke="#3d85d3" stroke-width="1.2"/><path d="M3.4 10.2H4.6M3.4 12.8H4.6" stroke="#3d85d3" stroke-width="1.2"/></svg></div>
<div class="t" style="left:120.3px;top:252.59px;font-size:12.3px;color:#5a80b2;transform:scaleX(0.9879);">Regulatory Compliance</div>
<svg class="a" style="left:290px;top:267px" width="4" height="4" viewBox="0 0 4 4"><path d="M3.5 0.5V3.5H0.5Z" fill="#c8c8c8"/></svg>
<div class="t" style="left:301.5px;top:251.84px;font-size:12px;color:#4a4a4a;transform:scaleX(1.0020);">Business Policy</div>
<div class="t" style="left:404.4px;top:252.60px;font-size:11.1px;color:#5a80b2;transform:scaleX(0.9937);">MyCompany Policy</div>
<div class="t" style="left:554.6px;top:251.84px;font-size:12px;color:#4a4a4a;transform:scaleX(0.9917);">5 Days ago</div>
<div class="a" style="left:657.6px;top:249.6px;line-height:0"><svg width="17" height="17" viewBox="0 0 17 17"><circle cx="8.3" cy="8.3" r="7.3" fill="#fff" stroke="#3d85d3" stroke-width="1.1"/><circle cx="8.3" cy="5.4" r="2.3" fill="#3d85d3"/><path d="M4.1 12.2 Q4.1 8.6 8.3 8.6 Q12.5 8.6 12.5 12.2 Q12.5 13.3 11.4 13.3 H5.2 Q4.1 13.3 4.1 12.2Z" fill="#3d85d3"/></svg></div>
<div class="a" style="left:651px;top:245px;width:105px;height:25px;overflow:hidden"><div class="t" style="left:27.7px;top:7.59px;font-size:12.3px;color:#5a80b2;transform:scaleX(1.0406);">Administrator</div></div>
<div class="a" style="left:0;top:299px;width:1018px;height:1px;background:#e6e6e6"></div>
<div class="a" style="left:0;top:273px;width:1018px;height:26px">
<svg width="80" height="16" viewBox="0 0 80 16" style="position:absolute;left:7px;top:4.5px">
<g fill="none" stroke="#d9e7f5" stroke-width="1.2">
<circle cx="6" cy="5.6" r="4.6" stroke-dasharray="1.7 0.5"/><circle cx="6" cy="5.6" r="2.5"/>
<path d="M3.3 9.4 L1.2 12.6 L3.2 12.5 L4.2 14 L6 10.6 L7.8 14 L8.8 12.5 L10.8 12.6 L8.7 9.4"/>
<rect x="20.6" y="6.1" width="2" height="6.4" fill="#d9e7f5" stroke="none"/>
<path d="M24 6.6 L27 2.6 Q27.5 0.6 28.8 1.1 Q29.6 1.6 29 4.1 L28.4 5.8 H32.5 Q33.6 6 33.2 7.2 L31.8 11.4 Q31.4 12.4 30.4 12.4 H24 Z"/>
<circle cx="47.5" cy="7" r="5.5" stroke-dasharray="2 0.5"/>
<path d="M47.5 4 V7.8 M47.5 9.3 V10.3"/>
<path d="M63.5 1.5 H74.5 V9.5 H66 L63.5 12 Z" stroke-width="1.1"/>
<path d="M65.5 4H72.5M65.5 6.5H70.5" stroke-width="1.2"/>
</g></svg>
</div>
<div class="a" style="left:97.6px;top:278px;line-height:0"><svg width="17" height="17" viewBox="0 0 17 17"><rect x="1.4" y="1.4" width="14.2" height="14.2" rx="1.2" fill="#fff" stroke="#3d85d3" stroke-width="1.6"/><path d="M4 2.2 H8.5 V7.6 L6.25 6.2 L4 7.6 Z" fill="#3d85d3"/><path d="M6 10.2H13M6 12.8H13" stroke="#3d85d3" stroke-width="1.2"/><path d="M3.4 10.2H4.6M3.4 12.8H4.6" stroke="#3d85d3" stroke-width="1.2"/></svg></div>
<div class="t" style="left:120.3px;top:280.59px;font-size:12.3px;color:#5a80b2;transform:scaleX(1.0118)">Collaboration Among Busin<span style="color:#555">...</span></div>
<svg class="a" style="left:290px;top:294px" width="4" height="4" viewBox="0 0 4 4"><path d="M3.5 0.5V3.5H0.5Z" fill="#c8c8c8"/></svg>
<div class="t" style="left:301.5px;top:279.84px;font-size:12px;color:#4a4a4a;transform:scaleX(1.0020);">Business Policy</div>
<div class="t" style="left:404.4px;top:280.60px;font-size:11.1px;color:#5a80b2;transform:scaleX(0.9937);">MyCompany Policy</div>
<div class="t" style="left:554.6px;top:279.84px;font-size:12px;color:#4a4a4a;transform:scaleX(0.9917);">5 Days ago</div>
<div class="a" style="left:657.6px;top:277.6px;line-height:0"><svg width="17" height="17" viewBox="0 0 17 17"><circle cx="8.3" cy="8.3" r="7.3" fill="#fff" stroke="#3d85d3" stroke-width="1.1"/><circle cx="8.3" cy="5.4" r="2.3" fill="#3d85d3"/><path d="M4.1 12.2 Q4.1 8.6 8.3 8.6 Q12.5 8.6 12.5 12.2 Q12.5 13.3 11.4 13.3 H5.2 Q4.1 13.3 4.1 12.2Z" fill="#3d85d3"/></svg></div>
<div class="a" style="left:651px;top:273px;width:105px;height:25px;overflow:hidden"><div class="t" style="left:27.7px;top:7.59px;font-size:12.3px;color:#5a80b2;transform:scaleX(1.0406);">Administrator</div></div>
<div class="a" style="left:0;top:326px;width:1018px;height:1px;background:#e6e6e6"></div>
<div class="a" style="left:0;top:300px;width:1018px;height:26px">
<svg width="80" height="16" viewBox="0 0 80 16" style="position:absolute;left:7px;top:4.5px">
<g fill="none" stroke="#d9e7f5" stroke-width="1.2">
<circle cx="6" cy="5.6" r="4.6" stroke-dasharray="1.7 0.5"/><circle cx="6" cy="5.6" r="2.5"/>
<path d="M3.3 9.4 L1.2 12.6 L3.2 12.5 L4.2 14 L6 10.6 L7.8 14 L8.8 12.5 L10.8 12.6 L8.7 9.4"/>
<rect x="20.6" y="6.1" width="2" height="6.4" fill="#d9e7f5" stroke="none"/>
<path d="M24 6.6 L27 2.6 Q27.5 0.6 28.8 1.1 Q29.6 1.6 29 4.1 L28.4 5.8 H32.5 Q33.6 6 33.2 7.2 L31.8 11.4 Q31.4 12.4 30.4 12.4 H24 Z"/>
<circle cx="47.5" cy="7" r="5.5" stroke-dasharray="2 0.5"/>
<path d="M47.5 4 V7.8 M47.5 9.3 V10.3"/>
<path d="M63.5 1.5 H74.5 V9.5 H66 L63.5 12 Z" stroke-width="1.1"/>
<path d="M65.5 4H72.5M65.5 6.5H70.5" stroke-width="1.2"/>
</g></svg>
</div>
<div class="a" style="left:97.6px;top:305px;line-height:0"><svg width="17" height="17" viewBox="0 0 17 17"><rect x="1.4" y="1.4" width="14.2" height="14.2" rx="1.2" fill="#fff" stroke="#3d85d3" stroke-width="1.6"/><path d="M4 2.2 H8.5 V7.6 L6.25 6.2 L4 7.6 Z" fill="#3d85d3"/><path d="M6 10.2H13M6 12.8H13" stroke="#3d85d3" stroke-width="1.2"/><path d="M3.4 10.2H4.6M3.4 12.8H4.6" stroke="#3d85d3" stroke-width="1.2"/></svg></div>
<div class="t" style="left:120.3px;top:307.59px;font-size:12.3px;color:#5a80b2;transform:scaleX(0.9916);">Data Based Decision Making</div>
<svg class="a" style="left:290px;top:321px" width="4" height="4" viewBox="0 0 4 4"><path d="M3.5 0.5V3.5H0.5Z" fill="#c8c8c8"/></svg>
<div class="t" style="left:301.5px;top:306.84px;font-size:12px;color:#4a4a4a;transform:scaleX(1.0020);">Business Policy</div>
<div class="t" style="left:404.4px;top:307.60px;font-size:11.1px;color:#5a80b2;transform:scaleX(0.9937);">MyCompany Policy</div>
<div class="t" style="left:554.6px;top:306.84px;font-size:12px;color:#4a4a4a;transform:scaleX(0.9917);">5 Days ago</div>
<div class="a" style="left:657.6px;top:304.6px;line-height:0"><svg width="17" height="17" viewBox="0 0 17 17"><circle cx="8.3" cy="8.3" r="7.3" fill="#fff" stroke="#3d85d3" stroke-width="1.1"/><circle cx="8.3" cy="5.4" r="2.3" fill="#3d85d3"/><path d="M4.1 12.2 Q4.1 8.6 8.3 8.6 Q12.5 8.6 12.5 12.2 Q12.5 13.3 11.4 13.3 H5.2 Q4.1 13.3 4.1 12.2Z" fill="#3d85d3"/></svg></div>
<div class="a" style="left:651px;top:300px;width:105px;height:25px;overflow:hidden"><div class="t" style="left:27.7px;top:7.59px;font-size:12.3px;color:#5a80b2;transform:scaleX(1.0406);">Administrator</div></div>
<div class="a" style="left:0;top:353px;width:1018px;height:1px;background:#e6e6e6"></div>
<div class="a" style="left:0;top:327px;width:1018px;height:26px">
<svg width="80" height="16" viewBox="0 0 80 16" style="position:absolute;left:7px;top:4.5px">
<g fill="none" stroke="#d9e7f5" stroke-width="1.2">
<circle cx="6" cy="5.6" r="4.6" stroke-dasharray="1.7 0.5"/><circle cx="6" cy="5.6" r="2.5"/>
<path d="M3.3 9.4 L1.2 12.6 L3.2 12.5 L4.2 14 L6 10.6 L7.8 14 L8.8 12.5 L10.8 12.6 L8.7 9.4"/>
<rect x="20.6" y="6.1" width="2" height="6.4" fill="#d9e7f5" stroke="none"/>
<path d="M24 6.6 L27 2.6 Q27.5 0.6 28.8 1.1 Q29.6 1.6 29 4.1 L28.4 5.8 H32.5 Q33.6 6 33.2 7.2 L31.8 11.4 Q31.4 12.4 30.4 12.4 H24 Z"/>
<circle cx="47.5" cy="7" r="5.5" stroke-dasharray="2 0.5"/>
<path d="M47.5 4 V7.8 M47.5 9.3 V10.3"/>
<path d="M63.5 1.5 H74.5 V9.5 H66 L63.5 12 Z" stroke-width="1.1"/>
<path d="M65.5 4H72.5M65.5 6.5H70.5" stroke-width="1.2"/>
</g></svg>
</div>
<div class="a" style="left:97.6px;top:332px;line-height:0"><svg width="17" height="17" viewBox="0 0 17 17"><rect x="1.4" y="1.4" width="14.2" height="14.2" rx="1.2" fill="#fff" stroke="#3d85d3" stroke-width="1.6"/><path d="M4 2.2 H8.5 V7.6 L6.25 6.2 L4 7.6 Z" fill="#3d85d3"/><path d="M6 10.2H13M6 12.8H13" stroke="#3d85d3" stroke-width="1.2"/><path d="M3.4 10.2H4.6M3.4 12.8H4.6" stroke="#3d85d3" stroke-width="1.2"/></svg></div>
<div class="t" style="left:120.3px;top:334.59px;font-size:12.3px;color:#5a80b2;transform:scaleX(0.9785);">MyCompany Policy</div>
<div class="t" style="left:301.5px;top:333.84px;font-size:12px;color:#4a4a4a;transform:scaleX(0.96)">Business Poli<span>...</span></div>
<div class="t" style="left:554.6px;top:333.84px;font-size:12px;color:#4a4a4a;transform:scaleX(0.9917);">5 Days ago</div>
<div class="a" style="left:657.6px;top:331.6px;line-height:0"><svg width="17" height="17" viewBox="0 0 17 17"><circle cx="8.3" cy="8.3" r="7.3" fill="#fff" stroke="#3d85d3" stroke-width="1.1"/><circle cx="8.3" cy="5.4" r="2.3" fill="#3d85d3"/><path d="M4.1 12.2 Q4.1 8.6 8.3 8.6 Q12.5 8.6 12.5 12.2 Q12.5 13.3 11.4 13.3 H5.2 Q4.1 13.3 4.1 12.2Z" fill="#3d85d3"/></svg></div>
<div class="a" style="left:651px;top:327px;width:105px;height:25px;overflow:hidden"><div class="t" style="left:27.7px;top:7.59px;font-size:12.3px;color:#5a80b2;transform:scaleX(1.0406);">Administrator</div></div>
<div class="a" style="left:0;top:381px;width:1018px;height:1px;background:#e6e6e6"></div>
<div class="a" style="left:0;top:354px;width:1018px;height:27px">
<svg width="80" height="16" viewBox="0 0 80 16" style="position:absolute;left:7px;top:4.5px">
<g fill="none" stroke="#d9e7f5" stroke-width="1.2">
<circle cx="6" cy="5.6" r="4.6" stroke-dasharray="1.7 0.5"/><circle cx="6" cy="5.6" r="2.5"/>
<path d="M3.3 9.4 L1.2 12.6 L3.2 12.5 L4.2 14 L6 10.6 L7.8 14 L8.8 12.5 L10.8 12.6 L8.7 9.4"/>
<rect x="20.6" y="6.1" width="2" height="6.4" fill="#d9e7f5" stroke="none"/>
<path d="M24 6.6 L27 2.6 Q27.5 0.6 28.8 1.1 Q29.6 1.6 29 4.1 L28.4 5.8 H32.5 Q33.6 6 33.2 7.2 L31.8 11.4 Q31.4 12.4 30.4 12.4 H24 Z"/>
<circle cx="47.5" cy="7" r="5.5" stroke-dasharray="2 0.5"/>
<path d="M47.5 4 V7.8 M47.5 9.3 V10.3"/>
<path d="M63.5 1.5 H74.5 V9.5 H66 L63.5 12 Z" stroke-width="1.1"/>
<path d="M65.5 4H72.5M65.5 6.5H70.5" stroke-width="1.2"/>
</g></svg>
</div>
<div class="a" style="left:97.6px;top:358.5px;line-height:0"><svg width="17" height="16" viewBox="0 0 17 16"><path d="M5.3 3.6V1.6 Q5.3 0.8 6.1 0.8 H10.9 Q11.7 0.8 11.7 1.6 V3.6" fill="none" stroke="#4a8ad6" stroke-width="1.3"/><path d="M0.6 5.4 Q0.6 3.4 2.6 3.4 H14.4 Q16.4 3.4 16.4 5.4 V8.6 Q8.5 10 0.6 8.6 Z" fill="#3f86d4"/><path d="M0.6 8.6 Q8.5 10 16.4 8.6 V13.6 Q16.4 15.6 14.4 15.6 H2.6 Q0.6 15.6 0.6 13.6 Z" fill="#8fc1ec"/><rect x="7.5" y="10.6" width="2" height="1.4" fill="#3f86d4"/><rect x="7.6" y="8.4" width="1.8" height="2.6" fill="#fdf3e6"/></svg></div>
<div class="t" style="left:120.3px;top:361.59px;font-size:12.3px;color:#5a80b2;transform:scaleX(1.0290)">Personally Identifiable Info<span style="color:#555">...</span></div>
<svg class="a" style="left:290px;top:376px" width="4" height="4" viewBox="0 0 4 4"><path d="M3.5 0.5V3.5H0.5Z" fill="#c8c8c8"/></svg>
<div class="t" style="left:301.5px;top:360.84px;font-size:12px;color:#4a4a4a;transform:scaleX(0.9882);">Business Rule</div>
<div class="t" style="left:404.4px;top:361.60px;font-size:11.1px;color:#5a80b2;transform:scaleX(0.9826)">MyCompany Business R<span style="color:#555">...</span></div>
<div class="t" style="left:554.6px;top:360.84px;font-size:12px;color:#4a4a4a;transform:scaleX(0.9917);">5 Days ago</div>
<div class="a" style="left:657.6px;top:358.6px;line-height:0"><svg width="17" height="17" viewBox="0 0 17 17"><circle cx="8.3" cy="8.3" r="7.3" fill="#fff" stroke="#3d85d3" stroke-width="1.1"/><circle cx="8.3" cy="5.4" r="2.3" fill="#3d85d3"/><path d="M4.1 12.2 Q4.1 8.6 8.3 8.6 Q12.5 8.6 12.5 12.2 Q12.5 13.3 11.4 13.3 H5.2 Q4.1 13.3 4.1 12.2Z" fill="#3d85d3"/></svg></div>
<div class="a" style="left:651px;top:354px;width:105px;height:25px;overflow:hidden"><div class="t" style="left:27.7px;top:7.59px;font-size:12.3px;color:#5a80b2;transform:scaleX(1.0406);">Administrator</div></div>
<div class="a" style="left:0;top:408px;width:1018px;height:1px;background:#e6e6e6"></div>
<div class="a" style="left:0;top:382px;width:1018px;height:26px">
<svg width="80" height="16" viewBox="0 0 80 16" style="position:absolute;left:7px;top:4.5px">
<g fill="none" stroke="#d9e7f5" stroke-width="1.2">
<circle cx="6" cy="5.6" r="4.6" stroke-dasharray="1.7 0.5"/><circle cx="6" cy="5.6" r="2.5"/>
<path d="M3.3 9.4 L1.2 12.6 L3.2 12.5 L4.2 14 L6 10.6 L7.8 14 L8.8 12.5 L10.8 12.6 L8.7 9.4"/>
<rect x="20.6" y="6.1" width="2" height="6.4" fill="#d9e7f5" stroke="none"/>
<path d="M24 6.6 L27 2.6 Q27.5 0.6 28.8 1.1 Q29.6 1.6 29 4.1 L28.4 5.8 H32.5 Q33.6 6 33.2 7.2 L31.8 11.4 Q31.4 12.4 30.4 12.4 H24 Z"/>
<circle cx="47.5" cy="7" r="5.5" stroke-dasharray="2 0.5"/>
<path d="M47.5 4 V7.8 M47.5 9.3 V10.3"/>
<path d="M63.5 1.5 H74.5 V9.5 H66 L63.5 12 Z" stroke-width="1.1"/>
<path d="M65.5 4H72.5M65.5 6.5H70.5" stroke-width="1.2"/>
</g></svg>
</div>
<div class="a" style="left:97.6px;top:386.5px;line-height:0"><svg width="17" height="16" viewBox="0 0 17 16"><path d="M5.3 3.6V1.6 Q5.3 0.8 6.1 0.8 H10.9 Q11.7 0.8 11.7 1.6 V3.6" fill="none" stroke="#4a8ad6" stroke-width="1.3"/><path d="M0.6 5.4 Q0.6 3.4 2.6 3.4 H14.4 Q16.4 3.4 16.4 5.4 V8.6 Q8.5 10 0.6 8.6 Z" fill="#3f86d4"/><path d="M0.6 8.6 Q8.5 10 16.4 8.6 V13.6 Q16.4 15.6 14.4 15.6 H2.6 Q0.6 15.6 0.6 13.6 Z" fill="#8fc1ec"/><rect x="7.5" y="10.6" width="2" height="1.4" fill="#3f86d4"/><rect x="7.6" y="8.4" width="1.8" height="2.6" fill="#fdf3e6"/></svg></div>
<div class="t" style="left:120.3px;top:389.59px;font-size:12.3px;color:#5a80b2;transform:scaleX(0.9979)">A Vendor or Customer must<span style="color:#555">...</span></div>
<svg class="a" style="left:290px;top:403px" width="4" height="4" viewBox="0 0 4 4"><path d="M3.5 0.5V3.5H0.5Z" fill="#c8c8c8"/></svg>
<div class="t" style="left:301.5px;top:388.84px;font-size:12px;color:#4a4a4a;transform:scaleX(0.9882);">Business Rule</div>
<div class="t" style="left:404.4px;top:389.60px;font-size:11.1px;color:#5a80b2;transform:scaleX(0.9826)">MyCompany Business R<span style="color:#555">...</span></div>
<div class="t" style="left:554.6px;top:388.84px;font-size:12px;color:#4a4a4a;transform:scaleX(0.9917);">5 Days ago</div>
<div class="a" style="left:657.6px;top:386.6px;line-height:0"><svg width="17" height="17" viewBox="0 0 17 17"><circle cx="8.3" cy="8.3" r="7.3" fill="#fff" stroke="#3d85d3" stroke-width="1.1"/><circle cx="8.3" cy="5.4" r="2.3" fill="#3d85d3"/><path d="M4.1 12.2 Q4.1 8.6 8.3 8.6 Q12.5 8.6 12.5 12.2 Q12.5 13.3 11.4 13.3 H5.2 Q4.1 13.3 4.1 12.2Z" fill="#3d85d3"/></svg></div>
<div class="a" style="left:651px;top:382px;width:105px;height:25px;overflow:hidden"><div class="t" style="left:27.7px;top:7.59px;font-size:12.3px;color:#5a80b2;transform:scaleX(1.0406);">Administrator</div></div>
<div class="a" style="left:91px;top:0;width:1px;height:402px;background:#d3d3d3"></div>
<div class="a" style="left:294px;top:0;width:1px;height:402px;background:#d3d3d3"></div>
<div class="a" style="left:397px;top:0;width:1px;height:402px;background:#d3d3d3"></div>
<div class="a" style="left:547px;top:0;width:1px;height:402px;background:#d3d3d3"></div>
<div class="a" style="left:651px;top:0;width:1px;height:402px;background:#d3d3d3"></div>
<div class="a" style="left:756px;top:0;width:1px;height:402px;background:#d3d3d3"></div>
</div>
<div class="a" style="left:1063px;top:132px;width:17px;height:402px;background:#f1f1f1"></div>
<svg class="a" style="left:1063px;top:134px" width="17" height="12" viewBox="0 0 17 12"><path d="M5 9 L8.5 5 L12 9Z" fill="#a3a3a3"/></svg>
<div class="a" style="left:1065px;top:149px;width:13px;height:113px;background:#c1c1c1"></div>
<svg class="a" style="left:1063px;top:519px" width="17" height="12" viewBox="0 0 17 12"><path d="M5 4 L8.5 8 L12 4Z" fill="#505050"/></svg>
<div class="a" style="left:45px;top:534px;width:1018px;height:17px;background:#f1f1f1"></div>
<div class="a" style="left:62px;top:536px;width:948px;height:13px;background:#c1c1c1"></div>
<svg class="a" style="left:47px;top:536px" width="12" height="13" viewBox="0 0 12 13"><path d="M8 3 L4 6.5 L8 10Z" fill="#a3a3a3"/></svg>
<svg class="a" style="left:1049px;top:536px" width="12" height="13" viewBox="0 0 12 13"><path d="M4 3 L8 6.5 L4 10Z" fill="#505050"/></svg>
<div class="a" style="left:1063px;top:534px;width:17px;height:17px;background:#dcdcdc"></div>
<div class="a" style="left:0;top:0;width:1px;height:552px;background:#332c1e"></div>
<div class="a" style="left:1124px;top:0;width:1px;height:552px;background:#332c1e"></div>
<div class="a" style="left:0;top:551px;width:1125px;height:1px;background:#332c1e"></div>
</body></html>
